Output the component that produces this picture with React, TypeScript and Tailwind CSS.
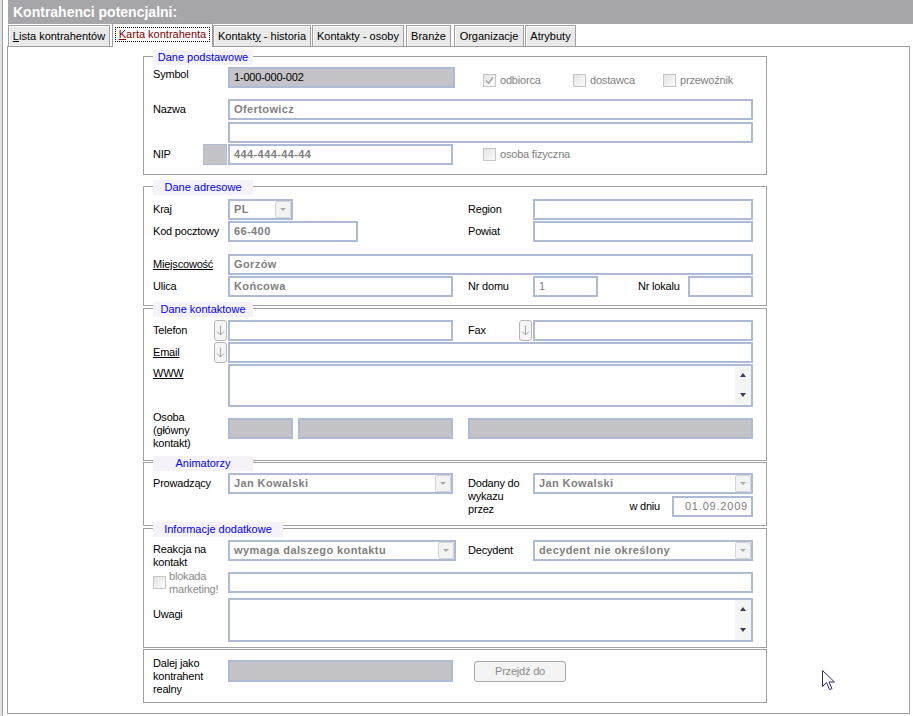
import React from "react";

type P = { className?: string; children?: React.ReactNode };

function Label({ className = "", children }: P) {
  return <div className={`flex shrink-0 items-center tracking-[-0.2px] ${className}`}>{children}</div>;
}

function Field({ className = "", gray = false, children }: P & { gray?: boolean }) {
  return (
    <div
      className={`flex shrink-0 items-center overflow-hidden whitespace-nowrap border-2 border-[#adbcd4] pl-[4px] ${
        gray ? "bg-[#c4c3c7]" : "bg-white"
      } ${className}`}
    >
      {children}
    </div>
  );
}

function Value({ children }: P) {
  return <span className="font-bold tracking-[0.4px] text-[#808080]">{children}</span>;
}

function Select({ className = "", children }: P) {
  return (
    <div className={`flex shrink-0 items-center justify-between border-2 border-[#adbcd4] bg-white pl-[4px] ${className}`}>
      <Value>{children}</Value>
      <div className="flex h-[17px] w-[16px] items-center justify-center rounded-[2px] border border-[#d4d4d4] bg-[#f3f3f3]">
        <svg width="6" height="3" viewBox="0 0 6 3">
          <path d="M0 0h6L3 3z" fill="#ababab" />
        </svg>
      </div>
    </div>
  );
}

function Memo({ className = "" }: P) {
  return (
    <div className={`flex shrink-0 justify-end border-2 border-[#adbcd4] bg-white ${className}`}>
      <div className="flex w-[16px] flex-col items-center justify-between bg-[#f5f5f5] pb-[8px] pt-[7px]">
        <svg width="6" height="4" viewBox="0 0 6 4">
          <path d="M3 0l3 4H0z" fill="#3c3c5c" />
        </svg>
        <svg width="6" height="4" viewBox="0 0 6 4">
          <path d="M0 0h6L3 4z" fill="#3c3c5c" />
        </svg>
      </div>
    </div>
  );
}

function Check({ checked = false, className = "", children }: P & { checked?: boolean }) {
  return (
    <div className={`flex shrink-0 items-center tracking-[-0.2px] text-[#808080] ${className}`}>
      <div className="flex h-[13px] w-[13px] shrink-0 items-center justify-center border border-[#c5c5c5] bg-gradient-to-br from-[#e4e4e4] to-[#fbfbfb]">
        {checked && (
          <svg width="9" height="9" viewBox="0 0 9 9">
            <path d="M1 4.5l2.5 2.5L8 1.5" fill="none" stroke="#a6a6a6" strokeWidth="1.6" />
          </svg>
        )}
      </div>
      {children && <span className="ml-[4px]">{children}</span>}
    </div>
  );
}

function DownBtn() {
  return (
    <div className="flex h-[21px] w-[13px] shrink-0 items-center justify-center rounded-[3px] border border-[#b7b7b7] bg-[#f5f5f5]">
      <svg width="9" height="11" viewBox="0 0 9 11">
        <path d="M4.5 0.5v9M1 6.5l3.5 3.5 3.5-3.5" fill="none" stroke="#a3a3a3" />
      </svg>
    </div>
  );
}

function Section({
  legend,
  legendW = "w-[100px]",
  className = "",
  children,
}: P & { legend?: string; legendW?: string }) {
  return (
    <div className={`relative w-[624px] shrink-0 border border-[#a0a0a0] pl-[9px] ${className}`}>
      {legend && (
        <div className={`absolute -top-[7px] left-[9px] h-[15px] bg-[#f6f2fa] text-center leading-[15px] text-[#0000ff] ${legendW}`}>
          {legend}
        </div>
      )}
      {children}
    </div>
  );
}

const tabBase = "flex h-[21px] shrink-0 items-center justify-center border border-b-0 border-[#9f9f9f] bg-[#e9e9e9] shadow-[inset_1px_1px_0_#ffffff]";

export default function App() {
  return (
    <div className="relative flex h-[716px] w-[913px] overflow-hidden bg-white font-['Liberation_Sans',Arial,sans-serif] text-[11px] leading-[13px] text-black">
      {/* left frame edge */}
      <div className="flex h-full w-[7px] shrink-0">
        <div className="w-[2px] bg-[#e2e2e2]" />
        <div className="w-[1px] bg-[#a0a0a0]" />
      </div>

      <div className="flex w-[906px] flex-col">
        {/* Title */}
        <div className="ml-[1px] flex h-[24px] items-center bg-[#a6a5a9] pl-[5px] text-[14px] font-bold text-white">
          Kontrahenci potencjalni:
        </div>

        {/* Tabs */}
        <div className="relative z-10 flex h-[22px] items-end pl-[1px]">
          <div className={`${tabBase} w-[102px]`}>
            <span><span className="underline">L</span>ista kontrahentów</span>
          </div>
          <div className="-mb-[1px] ml-[2px] flex h-[24px] w-[101px] shrink-0 items-start justify-center border border-b-0 border-[#9f9f9f] bg-white pt-[3px]">
            <span className="border border-dotted border-black px-[3px] leading-[13px] text-[#800000]">
              <span className="underline">K</span>arta kontrahenta
            </span>
          </div>
          <div className={`${tabBase} w-[98px]`}>
            <span>Kontakt<span className="underline">y</span> - historia</span>
          </div>
          <div className={`${tabBase} ml-[1px] w-[92px]`}>Kontakty - osoby</div>
          <div className={`${tabBase} ml-[2px] w-[45px]`}>Branże</div>
          <div className={`${tabBase} ml-[3px] w-[70px]`}>Organizacje</div>
          <div className={`${tabBase} ml-[1px] w-[51px]`}>Atrybuty</div>
        </div>

        {/* Panel */}
        <div className="flex h-[668px] w-[903px] flex-col border border-[#a0a0a0] pl-[135px] pt-[9px]">
          {/* Dane podstawowe */}
          <Section legend="Dane podstawowe" className="h-[119px]">
            <div className="mt-[10px] flex h-[21px]">
              <Label className="w-[75px] items-start pt-[1px]">Symbol</Label>
              <Field gray className="w-[227px]">
                <span className="tracking-[-0.2px]">1-000-000-002</span>
              </Field>
              <div className="ml-[28px] mt-[6px] flex">
                <Check checked className="w-[90px]">odbiorca</Check>
                <Check className="w-[90px]">dostawca</Check>
                <Check>przewoźnik</Check>
              </div>
            </div>
            <div className="mt-[11px] flex h-[21px]">
              <Label className="w-[75px]">Nazwa</Label>
              <Field className="w-[525px]">
                <Value>Ofertowicz</Value>
              </Field>
            </div>
            <div className="mt-[2px] flex h-[21px]">
              <div className="w-[75px] shrink-0" />
              <Field className="w-[525px]" />
            </div>
            <div className="mt-[1px] flex h-[21px] items-center">
              <Label className="h-full w-[50px]">NIP</Label>
              <div className="h-full w-[24px] shrink-0 border border-[#adbcd4] bg-[#c4c3c7]" />
              <Field className="ml-[1px] h-full w-[225px]">
                <Value>444-444-44-44</Value>
              </Field>
              <Check className="ml-[30px]">osoba fizyczna</Check>
            </div>
          </Section>

          {/* Dane adresowe */}
          <Section legend="Dane adresowe" className="mt-[11px] h-[120px]">
            <div className="mt-[12px] flex h-[21px]">
              <Label className="w-[75px]">Kraj</Label>
              <div className="w-[225px] shrink-0">
                <Select className="h-[21px] w-[65px]">PL</Select>
              </div>
              <Label className="ml-[15px] w-[65px]">Region</Label>
              <Field className="w-[220px]" />
            </div>
            <div className="mt-[1px] flex h-[21px]">
              <Label className="w-[75px]">Kod pocztowy</Label>
              <div className="w-[225px] shrink-0">
                <Field className="h-[21px] w-[130px]">
                  <Value>66-400</Value>
                </Field>
              </div>
              <Label className="ml-[15px] w-[65px]">Powiat</Label>
              <Field className="w-[220px]" />
            </div>
            <div className="mt-[12px] flex h-[21px]">
              <Label className="w-[75px]">
                <span className="underline">Miejscowość</span>
              </Label>
              <Field className="w-[525px]">
                <Value>Gorzów</Value>
              </Field>
            </div>
            <div className="mt-[1px] flex h-[21px]">
              <Label className="w-[75px]">Ulica</Label>
              <Field className="w-[225px]">
                <Value>Końcowa</Value>
              </Field>
              <Label className="ml-[15px] w-[65px]">Nr domu</Label>
              <Field className="w-[65px]">
                <span className="text-[#808080]">1</span>
              </Field>
              <Label className="ml-[40px] w-[50px]">Nr lokalu</Label>
              <Field className="w-[65px]" />
            </div>
          </Section>

          {/* Dane kontaktowe */}
          <Section legend="Dane kontaktowe" className="mt-[2px] h-[153px]">
            <div className="mt-[11px] flex h-[21px]">
              <Label className="w-[61px]">Telefon</Label>
              <DownBtn />
              <Field className="ml-[1px] w-[225px]" />
              <Label className="ml-[15px] w-[51px]">Fax</Label>
              <DownBtn />
              <Field className="ml-[1px] w-[220px]" />
            </div>
            <div className="mt-[1px] flex h-[21px]">
              <Label className="w-[61px]">
                <span className="underline">Email</span>
              </Label>
              <DownBtn />
              <Field className="ml-[1px] w-[525px]" />
            </div>
            <div className="mt-[1px] flex h-[43px]">
              <Label className="w-[75px] items-start pt-[3px]">
                <span className="underline">WWW</span>
              </Label>
              <Memo className="w-[525px]" />
            </div>
            <div className="mt-[4px] flex items-start">
              <Label className="w-[75px]">
                Osoba
                <br />
                (główny
                <br />
                kontakt)
              </Label>
              <Field gray className="mt-[7px] h-[21px] w-[65px]" />
              <Field gray className="ml-[5px] mt-[7px] h-[21px] w-[155px]" />
              <Field gray className="ml-[15px] mt-[7px] h-[21px] w-[285px]" />
            </div>
          </Section>

          {/* Animatorzy */}
          <Section legend="Animatorzy" className="mt-[1px] h-[64px]">
            <div className="mt-[10px] flex items-start">
              <Label className="h-[21px] w-[75px]">Prowadzący</Label>
              <Select className="h-[21px] w-[225px]">Jan Kowalski</Select>
              <Label className="ml-[15px] w-[65px] pt-[4px]">
                Dodany do
                <br />
                wykazu
                <br />
                przez
              </Label>
              <div className="flex w-[220px] shrink-0 flex-col">
                <Select className="h-[21px] w-[220px]">Jan Kowalski</Select>
                <div className="mt-[2px] flex h-[21px] justify-end">
                  <Label>w dniu</Label>
                  <Field className="ml-[12px] w-[81px] justify-end pr-[3px]">
                    <span className="tracking-[0.8px] text-[#808080]">01.09.2009</span>
                  </Field>
                </div>
              </div>
            </div>
          </Section>

          {/* Informacje dodatkowe */}
          <Section legend="Informacje dodatkowe" legendW="w-[130px]" className="mt-[2px] h-[120px]">
            <div className="mt-[11px] flex h-[21px] items-start">
              <Label className="w-[75px] pt-[3px]">
                Reakcja na
                <br />
                kontakt
              </Label>
              <Select className="h-[21px] w-[228px]">wymaga dalszego kontaktu</Select>
              <Label className="ml-[12px] h-[21px] w-[65px]">Decydent</Label>
              <Select className="h-[21px] w-[220px]">decydent nie określony</Select>
            </div>
            <div className="mt-[11px] flex h-[21px] items-start">
              <div className="flex w-[75px] shrink-0 items-start">
                <div className="mt-[4px]">
                  <Check />
                </div>
                <div className="-mt-[2px] ml-[3px] tracking-[-0.2px] text-[#8a8a8a]">
                  blokada
                  <br />
                  marketing!
                </div>
              </div>
              <Field className="h-[21px] w-[525px]" />
            </div>
            <div className="mt-[5px] flex h-[44px]">
              <Label className="w-[75px] items-start pt-[10px]">Uwagi</Label>
              <Memo className="w-[525px]" />
            </div>
          </Section>

          {/* Dalej jako kontrahent realny */}
          <Section className="mt-[1px] h-[54px]">
            <div className="mt-[7px] flex items-start">
              <Label className="w-[75px]">
                Dalej jako
                <br />
                kontrahent
                <br />
                realny
              </Label>
              <Field gray className="mt-[3px] h-[22px] w-[225px]" />
              <button className="ml-[21px] mt-[4px] flex h-[21px] w-[92px] shrink-0 items-center justify-center rounded-[3px] border border-[#a9a9a9] bg-[#f4f4f4] tracking-[-0.2px] text-[#8a8a8a]">
                Przejdź do
              </button>
            </div>
          </Section>
        </div>
      </div>

      {/* mouse pointer */}
      <svg className="absolute left-[822px] top-[670px]" width="14" height="21" viewBox="0 0 14 21">
        <path d="M0.5 0.5v16l4-4 3 7 2.5-1-3-6.5h5.5z" fill="#ffffff" stroke="#2e2e6e" strokeWidth="1" />
      </svg>
    </div>
  );
}
